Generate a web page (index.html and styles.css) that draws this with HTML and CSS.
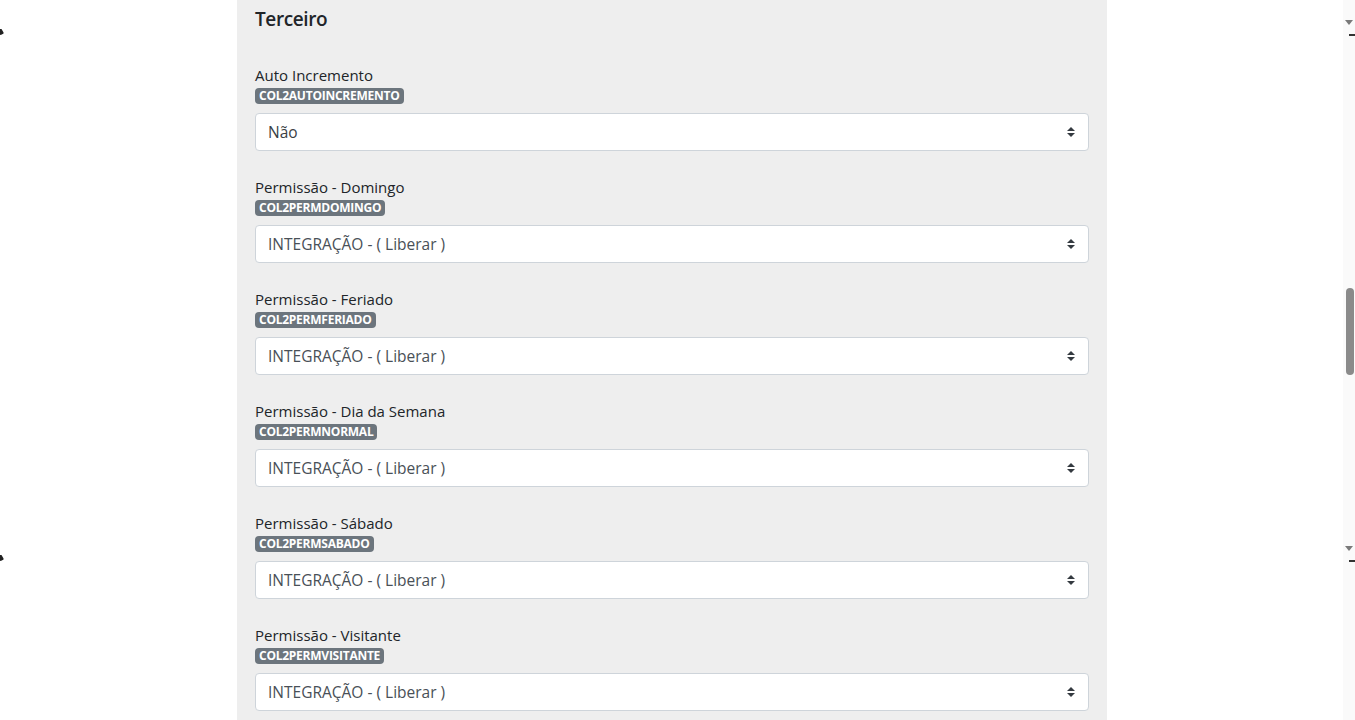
FILE: index.html
```html
<!DOCTYPE html>
<html lang="pt">
<head>
<meta charset="utf-8">
<title>Terceiro</title>
<link rel="stylesheet" href="styles.css">
</head>
<body>
<div class="page">
  <section class="panel">
    <h5 class="title">Terceiro</h5>
    <div class="group">
      <label class="label">Auto Incremento</label>
      <span class="badge">COL2AUTOINCREMENTO</span>
      <div class="select dark">Não</div>
    </div>
    <div class="group">
      <label class="label">Permissão - Domingo</label>
      <span class="badge">COL2PERMDOMINGO</span>
      <div class="select">INTEGRAÇÃO - ( Liberar )</div>
    </div>
    <div class="group">
      <label class="label">Permissão - Feriado</label>
      <span class="badge">COL2PERMFERIADO</span>
      <div class="select">INTEGRAÇÃO - ( Liberar )</div>
    </div>
    <div class="group">
      <label class="label">Permissão - Dia da Semana</label>
      <span class="badge">COL2PERMNORMAL</span>
      <div class="select">INTEGRAÇÃO - ( Liberar )</div>
    </div>
    <div class="group">
      <label class="label">Permissão - Sábado</label>
      <span class="badge">COL2PERMSABADO</span>
      <div class="select">INTEGRAÇÃO - ( Liberar )</div>
    </div>
    <div class="group">
      <label class="label">Permissão - Visitante</label>
      <span class="badge">COL2PERMVISITANTE</span>
      <div class="select">INTEGRAÇÃO - ( Liberar )</div>
    </div>
  </section>
</div>
<div class="scrolltrack"><div class="thumb"></div></div>
<div class="mark arrow a1"></div>
<div class="mark arrow a2"></div>
<div class="mark dash d1"></div>
<div class="mark dash d2"></div>
<div class="mark corner c1"></div>
<div class="mark corner c2"></div>
</body>
</html>
```
FILE: styles.css
```css
* { box-sizing: border-box; }
html, body { margin: 0; padding: 0; background: #fff; overflow: hidden; }
body {
  font-family: "Segoe UI", "Open Sans", "Noto Sans", sans-serif;
  color: #212529;
  width: 1355px;
  height: 720px;
  position: relative;
}
.page {
  display: flex;
  justify-content: flex-start;
  padding-left: 237px;
  height: 720px;
}
.panel {
  width: 870px;
  background: #eeeeee;
  padding: 6px 18px 0 18px;
  height: 720px;
}
.title {
  margin: 0 0 31px 0;
  font-size: 19px;
  font-weight: 600;
  line-height: 26px;
  letter-spacing: -0.4px;
}
.group {
  display: flex;
  flex-direction: column;
  align-items: flex-start;
  margin-bottom: 24px;
}
.label {
  font-size: 15px;
  line-height: 24px;
}
.badge {
  display: inline-block;
  margin-top: 1px;
  background: #6c757d;
  color: #fff;
  font-size: 12px;
  font-weight: 700;
  line-height: 16px;
  height: 16px;
  padding: 0 4px;
  border-radius: 4px;
  letter-spacing: -0.25px;
}
.select {
  margin-top: 9px;
  width: 100%;
  height: 38px;
  background: #fff;
  border: 1px solid #ced4da;
  border-radius: 4px;
  padding: 0 12px;
  font-size: 15.5px;
  line-height: 36px;
  color: #495057;
  background-image: url("data:image/svg+xml,%3csvg xmlns='http://www.w3.org/2000/svg' width='4' height='5' viewBox='0 0 4 5'%3e%3cpath fill='%23343a40' d='M2 0L0 2h4zm0 5L0 3h4z'/%3e%3c/svg%3e");
  background-repeat: no-repeat;
  background-position: right 13px center;
  background-size: 8px 10px;
}
.select.dark { color: #3a3f44; }
.scrolltrack {
  position: absolute;
  top: 0;
  right: 0;
  width: 12px;
  height: 720px;
  background: #fafafa;
}
.thumb {
  position: absolute;
  top: 288px;
  left: 3px;
  width: 8px;
  height: 87px;
  border-radius: 4px;
  background: #8a8a8a;
}
.mark { position: absolute; }
.arrow {
  left: 1345px;
  width: 0;
  height: 0;
  border-left: 4px solid transparent;
  border-right: 4px solid transparent;
  border-top: 5px solid #7a7a7a;
}
.a1 { top: 20px; }
.a2 { top: 546px; }
.dash { left: 1349px; width: 6px; height: 2px; background: #333; }
.d1 { top: 34px; }
.d2 { top: 560px; }
.corner {
  left: 0;
  width: 5px;
  height: 6px;
  background: #222;
  border-bottom-right-radius: 5px 6px;
  clip-path: polygon(0 0, 30% 0, 100% 100%, 0 100%);
}
.c1 { top: 29px; }
.c2 { top: 555px; }
```
